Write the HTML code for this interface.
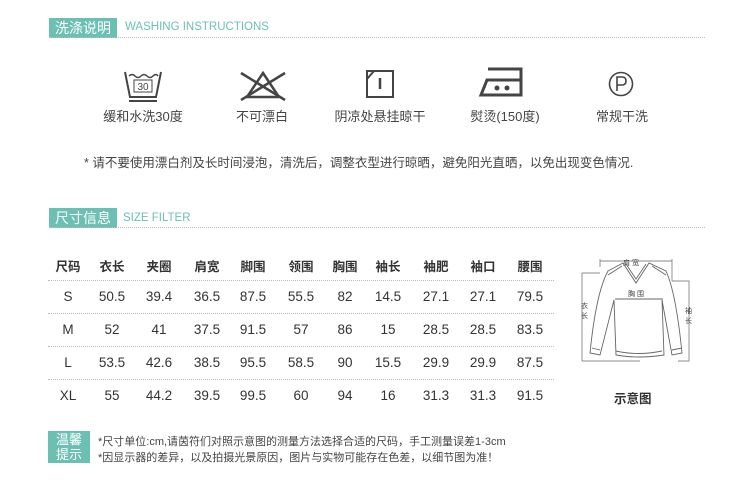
<!DOCTYPE html>
<html><head><meta charset="utf-8"><style>
body{margin:0;width:750px;height:482px;background:#fff;position:relative;overflow:hidden;font-family:"Liberation Sans","Noto Sans CJK SC",sans-serif;color:#333}
.a{position:absolute;white-space:nowrap}
.tag{background:#6cc0b3;color:#fff;font-size:14px;line-height:20px;padding:0 6px;height:20px}
.en{color:#6cc0b3;font-size:11.5px}
.dot{position:absolute;border-top:1px dotted #bbb;height:0}
.lbl{font-size:13px;color:#444;transform:translateX(-50%)}
.c{transform:translateX(-50%);font-size:13.5px;color:#333}
.h{font-weight:bold;font-size:12.5px}
</style></head><body>
<div class="a tag" style="left:49px;top:18px">洗涤说明</div>
<div class="a en" style="left:125px;top:21px">WASHING INSTRUCTIONS</div>
<div class="dot" style="left:49px;top:37px;width:656px"></div>

<svg class="a" style="left:123px;top:70px" width="40" height="32" viewBox="0 0 40 32" fill="none" stroke="#444" stroke-width="2">
<path d="M2 2 L7 27 H33 L38 2"/><path d="M6 6 Q9 3 12 6 T18 6 T24 6 T30 6 T35 6" stroke-width="1.5"/><line x1="6" y1="31" x2="34" y2="31"/>
<rect x="11" y="10" width="18" height="12" stroke-width="1"/><text x="20" y="20" font-size="10" text-anchor="middle" fill="#444" stroke="none" font-family="Liberation Sans">30</text></svg>
<svg class="a" style="left:239px;top:70px" width="48" height="32" viewBox="0 0 48 32" fill="none" stroke="#444" stroke-width="2.5">
<path d="M24 3 L40 27 H8 Z"/><line x1="2" y1="30" x2="46" y2="3"/><line x1="2" y1="3" x2="46" y2="30"/></svg>
<svg class="a" style="left:366px;top:70px" width="28" height="28" viewBox="0 0 28 28" fill="none" stroke="#444" stroke-width="2">
<rect x="1" y="1" width="26" height="26"/><line x1="1" y1="9" x2="8" y2="1"/><line x1="14" y1="8" x2="14" y2="19" stroke-width="2.5"/></svg>
<svg class="a" style="left:478px;top:66px" width="50" height="32" viewBox="0 0 50 32" fill="none" stroke="#444" stroke-width="3">
<path d="M10 3 H43 V29 H3 L9 14 H43"/>
<circle cx="19" cy="22" r="2.5" fill="#444" stroke="none"/><circle cx="29" cy="22" r="2.5" fill="#444" stroke="none"/></svg>
<svg class="a" style="left:608px;top:71px" width="26" height="26" viewBox="0 0 26 26" fill="none" stroke="#444" stroke-width="1.6">
<circle cx="13" cy="13" r="11.5"/><path d="M9 20 V6 H14 Q18 6 18 10 Q18 14 14 14 H9"/></svg>

<div class="a lbl" style="left:143px;top:106px">缓和水洗30度</div>
<div class="a lbl" style="left:262px;top:106px">不可漂白</div>
<div class="a lbl" style="left:380px;top:106px">阴凉处悬挂晾干</div>
<div class="a lbl" style="left:505px;top:106px">熨烫(150度)</div>
<div class="a lbl" style="left:622px;top:106px">常规干洗</div>
<div class="a" style="left:84px;top:152px;font-size:12.5px;color:#444">* 请不要使用漂白剂及长时间浸泡，清洗后，调整衣型进行晾晒，避免阳光直晒，以免出现变色情况.</div>

<div class="a tag" style="left:49px;top:208px">尺寸信息</div>
<div class="a en" style="left:123px;top:212px">SIZE FILTER</div>
<div class="dot" style="left:49px;top:227px;width:656px"></div>

<div class="dot" style="left:48px;top:280px;width:506px"></div>
<div class="dot" style="left:48px;top:313px;width:506px"></div>
<div class="dot" style="left:48px;top:346px;width:506px"></div>
<div class="dot" style="left:48px;top:379px;width:506px"></div>

<div id="t"></div>
<script>
var xs=[68,112,159,207,253,301,345,388,436,483,530];
var rows=[["尺码","衣长","夹圈","肩宽","脚围","领围","胸围","袖长","袖肥","袖口","腰围"],
["S","50.5","39.4","36.5","87.5","55.5","82","14.5","27.1","27.1","79.5"],
["M","52","41","37.5","91.5","57","86","15","28.5","28.5","83.5"],
["L","53.5","42.6","38.5","95.5","58.5","90","15.5","29.9","29.9","87.5"],
["XL","55","44.2","39.5","99.5","60","94","16","31.3","31.3","91.5"]];
var ys=[256,289,322,355,388],h="";
rows.forEach(function(r,i){r.forEach(function(v,j){h+='<div class="a c'+(i==0?' h':'')+'" style="left:'+xs[j]+'px;top:'+ys[i]+'px">'+v+'</div>';});});
document.getElementById('t').innerHTML=h;
</script>

<svg class="a" style="left:578px;top:253px" width="116" height="112" viewBox="0 0 116 112" fill="none" stroke="#666" stroke-width="0.9">
<path d="M22 8 H94 M22 6 V14 M94 6 V28 M4 20 V108 M4 20 H22 M4 108 H62 M94 28 H111 V108 H100" stroke="#888"/>
<path d="M30 18 L45 10 L58 30 L71 10 L88 18 Q98 40 104 100 L94 102 L84 47 L86 102 Q60 106 38 102 L36 47 L22 102 L12 100 Q18 40 30 18 Z"/>
<path d="M48 11 L58 26 L68 11 M30 22 L44 13 M88 22 L74 13 M38 98 Q60 103 84 98 M37 46 H85 M14 95 L22 97 M104 95 L94 97"/>
<text x="45" y="12" font-size="7" fill="#444" stroke="none">肩 宽</text>
<text x="50" y="43" font-size="7" fill="#444" stroke="none">胸 围</text>
<text x="3" y="55" font-size="7" fill="#444" stroke="none">衣</text><text x="3" y="65" font-size="7" fill="#444" stroke="none">长</text>
<text x="107" y="60" font-size="7" fill="#444" stroke="none">袖</text><text x="107" y="70" font-size="7" fill="#444" stroke="none">长</text>
</svg>
<div class="a" style="left:614px;top:388px;font-size:12.5px;font-weight:bold;color:#333">示意图</div>

<div class="a" style="left:48px;top:431px;width:42px;height:32px;background:#6cc0b3;color:#fff;font-size:13px;line-height:15px;text-align:center;padding-top:1px;box-sizing:border-box">温馨<br>提示</div>
<div class="a" style="left:98px;top:433px;font-size:11px;color:#444">*尺寸单位:cm,请茵符们对照示意图的测量方法选择合适的尺码，手工测量误差1-3cm</div>
<div class="a" style="left:98px;top:449px;font-size:11px;color:#444">*因显示器的差异，以及拍摄光景原因，图片与实物可能存在色差，以细节图为准！</div>
</body></html>
